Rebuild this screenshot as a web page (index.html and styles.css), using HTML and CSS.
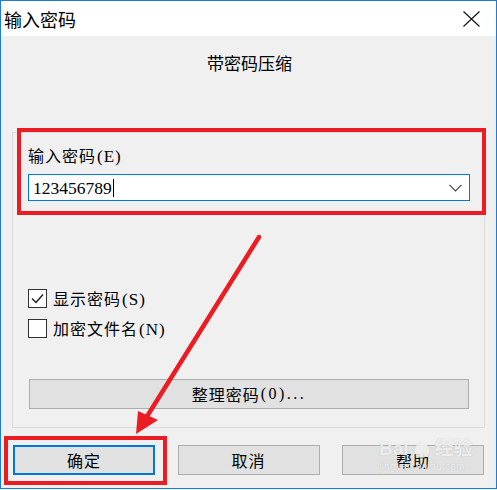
FILE: index.html
```html
<!DOCTYPE html>
<html lang="zh-CN">
<head>
<meta charset="utf-8">
<title>输入密码</title>
<link rel="stylesheet" href="styles.css">
</head>
<body>
<div class="window">
  <div class="titlebar">
    <span class="title">输入密码</span>
    <svg class="close" width="17" height="16" viewBox="0 0 17 16"><path d="M0.5 0.5 L16.5 15.5 M16.5 0.5 L0.5 15.5" stroke="#111" stroke-width="1.1" fill="none"/></svg>
  </div>
  <div class="content">
    <div class="heading">带密码压缩</div>
    <div class="group">
      <div class="label">输入密码<span class="latin">(E)</span></div>
      <div class="combo">
        <span class="value">123456789</span><span class="caret"></span>
        <svg class="chev" width="13" height="8" viewBox="0 0 13 8"><path d="M0.5 0.8 L6.5 6.8 L12.5 0.8" stroke="#444" stroke-width="1.2" fill="none"/></svg>
      </div>
      <div class="checks">
        <div class="check">
          <span class="box"><svg width="17" height="17" viewBox="0 0 17 17"><path d="M3 8.5 L7 12.5 L14 4.5" stroke="#222" stroke-width="1.5" fill="none"/></svg></span>
          <span class="ctext">显示密码<span class="latin">(S)</span></span>
        </div>
        <div class="check">
          <span class="box"></span>
          <span class="ctext">加密文件名<span class="latin">(N)</span></span>
        </div>
      </div>
      <div class="btn wide">整理密码<span class="latin dots">(0)...</span></div>
    </div>
    <div class="actions">
      <div class="btn default">确定</div>
      <div class="btn">取消</div>
      <div class="btn">帮助</div>
    </div>
  </div>

  <div class="mark mark-input"></div>
  <div class="mark mark-ok"></div>
  <svg class="arrow" width="497" height="490" viewBox="0 0 497 490">
    <line x1="259" y1="237" x2="146" y2="418" stroke="#ec1c24" stroke-width="4.5" stroke-linecap="round"/>
    <polygon points="136,434 138,411 158,420" fill="#ec1c24"/>
  </svg>
  <div class="watermark">
    <div class="wm-top"><span>Bai</span><span class="paw">&#x2B24;</span><span>经验</span></div>
    <div class="wm-url">jingyan.baidu.com</div>
  </div>
</div>
</body>
</html>
```
FILE: styles.css
```css
* { box-sizing: border-box; }
html, body { margin: 0; padding: 0; background: #f4f4f4; }
body {
  width: 497px; height: 490px; overflow: hidden;
  font-family: "Noto Sans CJK SC", "Noto Sans", sans-serif;
  color: #000;
}
.window {
  position: relative;
  width: 497px; height: 489px;
  border: 1px solid #1a7dd7;
  display: flex; flex-direction: column;
  background: #f0f0f0;
}
.titlebar {
  height: 35px; background: #fff;
  display: flex; align-items: center; justify-content: space-between;
  padding: 0 16px 0 3px;
}
.title { font-size: 18px; line-height: 24px; }
.close { display: block; margin-top: 1px; }
.content { flex: 1; padding: 0 12px; display: flex; flex-direction: column; }
.heading {
  font-size: 17px; line-height: 24px; text-align: center;
  padding-top: 15px; height: 96px; padding-left: 2px;
}
.group {
  margin: 0 -1px;
  border: 1px solid #dcdcdc;
  height: 296px;
  padding: 12px 14px 18px 15px;
  display: flex; flex-direction: column;
}
.latin { font-family: "Liberation Serif", serif; font-size: 17px; margin-left: 1px; }
.label { font-size: 16px; line-height: 20px; letter-spacing: 1px; }
.combo {
  margin-top: 7px; height: 27px; width: 442px;
  background: #fff; border: 1px solid #0078d7;
  display: flex; align-items: center; padding-left: 4px;
  position: relative;
}
.value { font-family: "Liberation Serif", serif; font-size: 17.5px; line-height: 20px; }
.caret { width: 1px; height: 18px; background: #000; margin-left: 1px; }
.chev { position: absolute; right: 7px; top: 9px; }
.checks { margin-top: 88px; display: flex; flex-direction: column; gap: 11px; }
.check { display: flex; align-items: center; height: 19px; gap: 6px; }
.box {
  width: 19px; height: 19px; border: 1px solid #333; background: #fff;
  display: flex; align-items: center; justify-content: center;
}
.box svg { display: block; }
.ctext { font-size: 16px; line-height: 20px; letter-spacing: 1px; }
.btn {
  height: 30px; width: 142px;
  background: #e1e1e1; border: 1px solid #adadad;
  display: flex; align-items: center; justify-content: center;
  font-size: 16px; letter-spacing: 1px;
}
.btn.wide { width: 440px; margin-top: 41px; margin-left: 1px; }
.btn .dots { letter-spacing: 2.5px; font-size: 16px; }
.btn.default { border: 2px solid #0078d7; }
.actions { margin-top: 17px; display: flex; justify-content: space-between; }

.mark { position: absolute; border: 4px solid #ec1c24; }
.mark-input { left: 16px; top: 127px; width: 469px; height: 87px; }
.mark-ok { left: 3px; top: 435px; width: 163px; height: 49px; }
.arrow { position: absolute; left: -1px; top: -1px; pointer-events: none; }

.watermark {
  position: absolute; left: 378px; top: 436px; width: 95px;
  color: rgba(255,255,255,0.75);
  text-shadow: 0 0 1px rgba(150,150,150,0.6);
  font-family: "Liberation Sans", "Noto Sans CJK SC", sans-serif;
}
.wm-top { display: flex; align-items: center; font-size: 19px; line-height: 24px; font-weight: bold; gap: 1px; }
.paw { font-size: 14px; margin: 0 4px; }
.wm-url { font-size: 10px; line-height: 12px; letter-spacing: 0.3px; }
```
